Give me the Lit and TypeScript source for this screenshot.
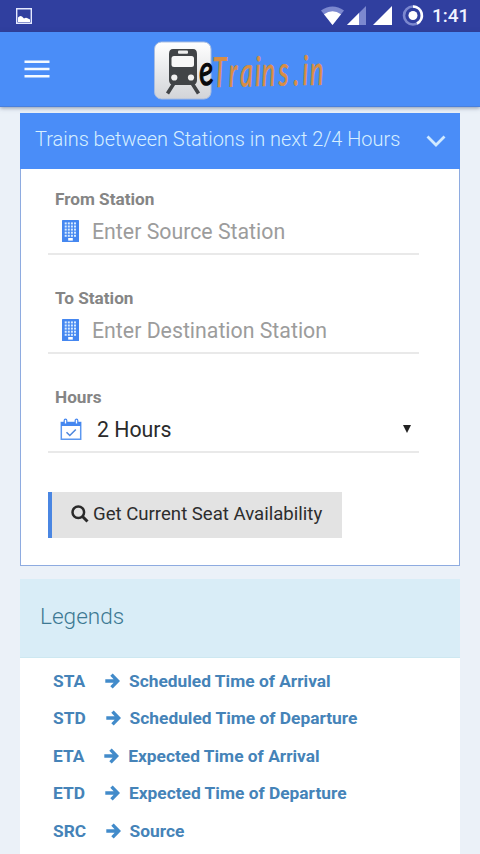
import { LitElement, html, css, svg } from "lit";
import { customElement } from "lit/decorators.js";

const windows = [0, 1, 2, 3, 4].flatMap((row) =>
  [0, 1, 2, 3].map((col) => svg`<rect x=${2.7 + col * 3.1} y=${2.4 + row * 3.1} width="2" height="2" fill="#d8ebff"/>`)
);

const building = html`<svg class="building" width="17" height="22" viewBox="0 0 17 22">
  <rect width="17" height="22" rx=".6" fill="#4587f0"/>${windows}
  <rect x="6.2" y="18" width="4.6" height="2.6" fill="#fff"/>
</svg>`;

const calendar = html`<svg class="calendar" width="22" height="23" viewBox="0 0 22 23" fill="none">
  <path d="M1.3 4.5h19.4v16.8H1.3z" stroke="#5b97f0" stroke-width="1.5"/>
  <path d="M1 4h20v4H1z" fill="#4587f0"/>
  <path d="M4.2 6V2.5a1.3 1.3 0 0 1 2.6 0V6zM15.2 6V2.5a1.3 1.3 0 0 1 2.6 0V6z" fill="#fff" stroke="#4587f0" stroke-width="1.2"/>
  <path d="M6.5 14.3l3.3 3.2 6-6" stroke="#4f88dd" stroke-width="1.6"/>
</svg>`;

const arrow = html`<svg class="arrow" width="15" height="16" viewBox="0 0 15 16" fill="none" stroke="#428bca" stroke-width="3.4">
  <path d="M.3 8h12M6.5 1.6L12.7 8l-6.2 6.4"/>
</svg>`;

const legends = [
  ["STA", "Scheduled Time of Arrival", "a"],
  ["STD", "Scheduled Time of Departure", "b"],
  ["ETA", "Expected Time of Arrival", "c"],
  ["ETD", "Expected Time of Departure", "d"],
  ["SRC", "Source", "e"],
];

@customElement("app-root")
export class AppRoot extends LitElement {
  static styles = css`
    :host { display: block; height: 854px; overflow: hidden; background: #ebf1f8; font-family: Roboto, "Liberation Sans", sans-serif; }
    * { box-sizing: border-box; }
    svg { display: block; flex: none; }
    .status { height: 32px; background: #303f9f; display: flex; align-items: center; padding: 0 11px 0 16px; }
    .icons { margin-left: auto; }
    .time { width: 37px; margin-left: 8px; color: #f1f3ff; font-size: 19px; line-height: 32px; font-weight: 500; white-space: nowrap; }
    .bar { height: 75px; background: #4a8df8; display: flex; padding: 0 0 0 24px; box-shadow: 0 1px 4px rgba(40, 60, 95, .5); border-bottom: 1px solid #4a80dc; }
    .menu { margin-top: 28px; }
    .logo { margin: 6px 0 0 104px; overflow: visible; }
    .mark { font-family: Lato, sans-serif; font-style: italic; }
    main { padding: 6px 20px 0; }
    .card { height: 453px; background: #fff; border: 1px solid #8eabe0; border-top: 0; }
    .head { height: 56px; margin: 0 -1px; background: #4a8df8; color: #d7efff; display: flex; justify-content: space-between; padding: 0 14px 0 15px; }
    .title { font-weight: 300; font-size: 19.95px; line-height: 52px; white-space: nowrap; }
    .chev { margin-top: 21px; }
    .form { padding: 0 40px 0 27px; }
    .field { height: 99px; padding-top: 19px; }
    .first { height: 86px; }
    .field.rest { padding-top: 32px; }
    .label { display: block; height: 23px; padding-left: 7px; font-weight: 700; font-size: 17.2px; line-height: 23px; color: #858585; }
    .control { height: 44px; border-bottom: 2px solid #e9e9e9; display: flex; align-items: center; padding-bottom: 2px; color: #9c9c9c; font-size: 21.3px; white-space: nowrap; }
    .building { margin: 0 13px 0 14px; }
    .calendar { margin: 0 15px 0 12px; }
    .value { color: #2b2b2b; }
    .caret { margin: 0 8px 0 auto; }
    .button { margin-top: 39px; width: 294px; height: 46px; border: 0; border-left: 4px solid #4a86e2; background: #e3e3e3; display: flex; align-items: center; padding: 0 0 2px 19px; color: #2d2d2d; font: 400 18.6px Roboto, sans-serif; white-space: nowrap; }
    .search { margin-right: 4px; }
    .legend { margin-top: 13px; background: #fff; height: 275px; }
    .lhead { height: 79px; background: #d9edf7; border-bottom: 1px solid #cde8f1; padding-left: 20px; color: #3d7993; font-size: 22.6px; font-weight: 300; line-height: 76px; }
    .rows { padding: 4.4px 0 0 33px; }
    .row { height: 37.4px; display: flex; align-items: center; color: #4583b8; font-weight: 700; font-size: 17.35px; white-space: nowrap; }
    .code { width: 52px; }
    .arrow { margin-right: 9px; }
    .b .code, .e .code { width: 52.6px; }
    .c .code { width: 51.2px; }
  `;

  render() {
    return html`
      <div class="status">
        <svg width="16" height="16" viewBox="0 0 16 16"><path d="M.7.7h14.6v14.6H.7z" fill="none" stroke="#e4e9ff" stroke-width="1.4"/><path d="M2 14V9.5q2-2.5 4-1l2 2q2-1.5 4 0l2 1V14z" fill="#fff"/></svg>
        <svg class="icons" width="103" height="22" viewBox="0 0 103 22">
          <path d="M0 5.5Q11.5-2.5 23 5.5L11.5 20z" fill="#7c88cf"/>
          <path d="M3 9.2Q11.5 3.3 20 9.2L11.5 20z" fill="#fff"/>
          <path d="M45 1v19H26z" fill="#7c88cf"/><path d="M38 8v12H26z" fill="#fff"/>
          <path d="M71 1v19H52z" fill="#fff"/>
          <circle cx="92" cy="10.5" r="9" fill="none" stroke="#7c88cf" stroke-width="2.6"/>
          <path d="M92 1.5a9 9 0 0 1 4 17" fill="none" stroke="#fff" stroke-width="2.6"/>
          <circle cx="92" cy="10.5" r="4.5" fill="#fff"/>
        </svg>
        <span class="time">1:41</span>
      </div>
      <header class="bar">
        <svg class="menu" width="26" height="19" viewBox="0 0 26 19"><path d="M.5 1.8h25M.5 9h25M.5 16.2h25" stroke="#f4faff" stroke-width="2.6"/></svg>
        <svg class="logo" width="176" height="64" viewBox="0 0 176 64">
          <defs><linearGradient id="tile" x2="0" y2="1"><stop stop-color="#fff"/><stop offset="1" stop-color="#d2d4d8"/></linearGradient></defs>
          <rect x=".5" y="4" width="56.5" height="57" rx="7" fill="url(#tile)" stroke="#a9bde0"/>
          <path d="M19 11h20q4 0 4 5v26q0 5-5 5H20q-5 0-5-5V16q0-5 4-5z" fill="#414447"/>
          <rect x="24" y="12.4" width="10" height="3.4" rx="1" fill="#eee"/>
          <rect x="17.5" y="18" width="22.5" height="11" rx="2.5" fill="#f7f7f7"/>
          <circle cx="20.3" cy="39.5" r="3.1" fill="#f0f0f0"/><circle cx="37" cy="39.5" r="3.1" fill="#f0f0f0"/>
          <path d="M19.5 46l-6 9.5M38.5 46l6 9.5" stroke="#414447" stroke-width="3.6"/>
          <g class="mark">
            <text transform="translate(46 47.5) rotate(-5) scale(.72 1)" font-size="42" font-weight="400" fill="#08090c" stroke="#08090c" stroke-width="1.2">e</text>
            <text transform="translate(59 49) rotate(-1.2) scale(.62 1)" x="0 26 44 68 79 106 130 145 157" font-size="41" font-weight="400" fill="#d98e43" stroke="#d98e43" stroke-width=".7">Trains.in</text>
          </g>
        </svg>
      </header>
      <main>
        <section class="card">
          <div class="head"><span class="title">Trains between Stations in next 2/4 Hours</span>
            <svg class="chev" width="20" height="14" viewBox="0 0 20 14"><path d="M1.5 2.5L10 11l8.5-8.5" fill="none" stroke="#d0e9ff" stroke-width="2.8"/></svg></div>
          <div class="form">
            <div class="field first"><span class="label">From Station</span><div class="control">${building}<span>Enter Source Station</span></div></div>
            <div class="field rest"><span class="label">To Station</span><div class="control">${building}<span>Enter Destination Station</span></div></div>
            <div class="field rest"><span class="label">Hours</span><div class="control">${calendar}<span class="value">2 Hours</span>
              <svg class="caret" width="8" height="8" viewBox="0 0 8 8"><path d="M0 0h8L4 8z" fill="#222"/></svg></div></div>
            <button class="button"><svg class="search" width="18" height="18" viewBox="0 0 18 18" fill="none" stroke="#2a2a2a"><circle cx="7.3" cy="7.3" r="5.8" stroke-width="2.5"/><path d="M11.5 11.5l5 5" stroke-width="3"/></svg><span>Get Current Seat Availability</span></button>
          </div>
        </section>
        <section class="legend">
          <div class="lhead">Legends</div>
          <div class="rows">${legends.map(([code, name, key]) => html`<div class="row ${key}"><span class="code">${code}</span>${arrow}<span>${name}</span></div>`)}</div>
        </section>
      </main>`;
  }
}
